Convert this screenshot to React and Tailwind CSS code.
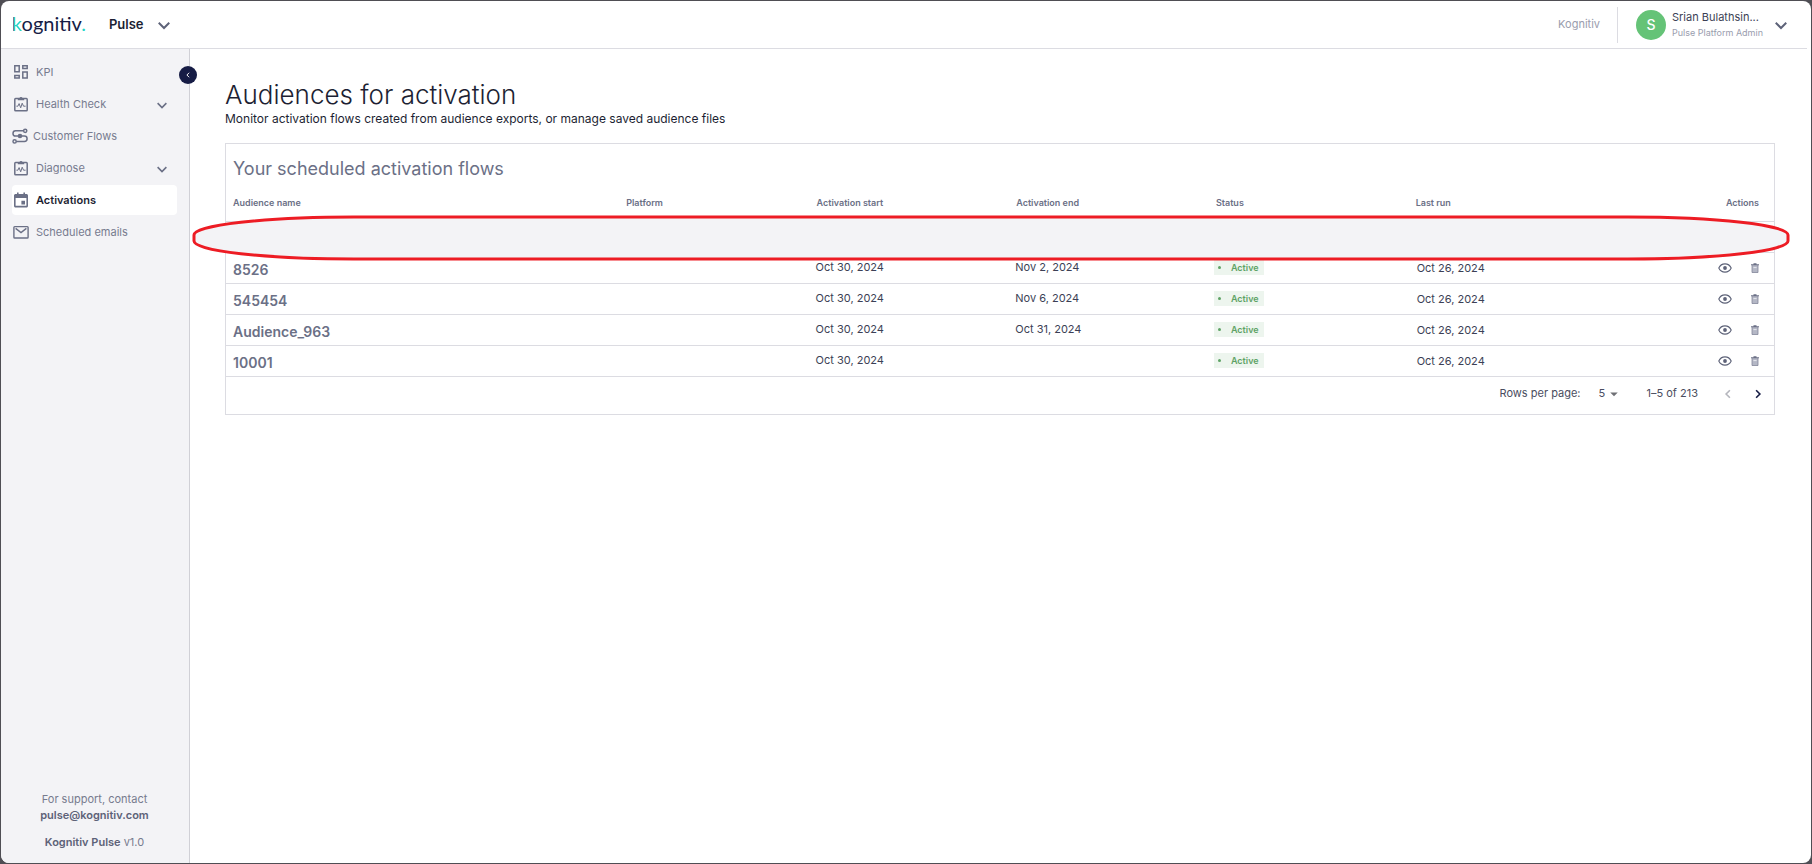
import { MdArrowDropDown } from 'react-icons/md';

const ROWS = [
  { id: 'blank', name: '', start: '', end: '', status: '', lastRun: '' },
  { id: '8526', name: '8526', start: 'Oct 30, 2024', end: 'Nov 2, 2024', status: 'Active', lastRun: 'Oct 26, 2024' },
  { id: '545454', name: '545454', start: 'Oct 30, 2024', end: 'Nov 6, 2024', status: 'Active', lastRun: 'Oct 26, 2024' },
  { id: '963', name: 'Audience_963', start: 'Oct 30, 2024', end: 'Oct 31, 2024', status: 'Active', lastRun: 'Oct 26, 2024' },
  { id: '10001', name: '10001', start: 'Oct 30, 2024', end: '', status: 'Active', lastRun: 'Oct 26, 2024' },
];

const DashboardIcon = () => (
  <svg viewBox="0 0 16 16" className="w-4 h-4 shrink-0" fill="none" stroke="currentColor" strokeWidth="1.5" aria-hidden="true">
    <path d="M1.8 1.8h4.4v6H1.8zM9.8 1.8h4.4v2.6H9.8zM1.8 11.4h4.4V14H1.8zM9.8 8h4.4v6H9.8z" />
  </svg>
);

const PulseClipboardIcon = () => (
  <svg viewBox="0 0 16 16" className="w-4 h-4 shrink-0" fill="none" stroke="currentColor" strokeWidth="1.5" aria-hidden="true">
    <rect x="1.8" y="2.6" width="12.4" height="12.2" rx="0.8" />
    <path d="M4.8 4.2V2h1.7a1.6 1.6 0 0 1 3 0h1.7v2.2z" fill="currentColor" stroke="none" />
    <path d="M3.4 10.2h1.5l1.2-2.6 1.6 4.2 1.5-4.6 1.3 3h2.1" strokeWidth="1" />
  </svg>
);

const FlowIcon = () => (
  <svg viewBox="0 0 16 16" className="w-4 h-4 shrink-0" fill="none" stroke="currentColor" strokeWidth="1.5" aria-hidden="true">
    <circle cx="13.2" cy="2.8" r="1.6" />
    <circle cx="2.6" cy="13.4" r="1.6" />
    <path d="M11.6 2.8H3.6a2.6 2.6 0 0 0 0 5.2h8.8a2.7 2.7 0 0 1 0 5.4H4.2" />
    <circle cx="8" cy="8" r="2.3" fill="currentColor" stroke="none" />
  </svg>
);

const CalendarIcon = () => (
  <svg viewBox="0 0 16 16" className="w-4 h-4 shrink-0" aria-hidden="true">
    <path
      d="M4 0.6h1.6V2h4.8V0.6H12V2h1.4c.9 0 1.6.7 1.6 1.5v10.4c0 .8-.7 1.5-1.6 1.5H2.6c-.9 0-1.6-.7-1.6-1.5V3.5C1 2.7 1.7 2 2.6 2H4zM2.6 6v7.8h10.8V6z"
      fill="currentColor"
      fillRule="evenodd"
    />
    <path d="M8.4 8.8h3.6v3.6H8.4z" fill="currentColor" />
  </svg>
);

const MailIcon = () => (
  <svg viewBox="0 0 16 16" className="w-4 h-4 shrink-0" fill="none" stroke="currentColor" strokeWidth="1.4" aria-hidden="true">
    <rect x="0.9" y="2.6" width="14.2" height="11.4" rx="0.8" />
    <path d="M2.6 4.4L8 8.6l5.4-4.2" />
  </svg>
);

const Chevron = ({ direction = 'down', className }) => {
  const paths = {
    down: 'M1 5l7 7 7-7',
    left: 'M11 2L5 8l6 6',
    right: 'M5 2l6 6-6 6',
  };
  return (
    <svg viewBox="0 0 16 16" className={className} fill="none" stroke="currentColor" strokeWidth="2.6" aria-hidden="true">
      <path d={paths[direction]} />
    </svg>
  );
};

const EyeIcon = () => (
  <svg viewBox="0 0 14 10" className="w-3.5 h-2.5" fill="none" stroke="currentColor" strokeWidth="1.1" aria-hidden="true">
    <path d="M0.8 5C2 2.4 4.2 0.9 7 0.9S12 2.4 13.2 5C12 7.6 9.8 9.1 7 9.1S2 7.6 0.8 5z" />
    <circle cx="7" cy="5" r="1.9" fill="currentColor" stroke="none" />
  </svg>
);

const TrashIcon = () => (
  <svg viewBox="0 0 8 10" className="w-2 h-2.5" aria-hidden="true">
    <path d="M1 2h6v7.5H1z" fill="#b4b7c5" />
    <path d="M0 1.2h2.5V0.3h3v0.9H8v1H0z" fill="#6b7086" />
    <path d="M1 2v7.5h6V2" fill="none" stroke="#83879b" strokeWidth="0.8" />
    <path d="M2.4 4.6h3.2" stroke="#f3f3f6" strokeWidth="0.8" />
  </svg>
);

const NAV = [
  { label: 'KPI', icon: <DashboardIcon /> },
  { label: 'Health Check', icon: <PulseClipboardIcon />, expandable: true },
  { label: 'Customer Flows', icon: <FlowIcon />, tight: true },
  { label: 'Diagnose', icon: <PulseClipboardIcon />, expandable: true },
  { label: 'Activations', icon: <CalendarIcon />, active: true },
  { label: 'Scheduled emails', icon: <MailIcon /> },
];

const Header = () => (
  <header className="flex items-center h-[47px] box-content border-b border-[#dcdce2] mr-1 pl-[11px]">
    <a href="#home" className="pb-1 font-[Lato] text-[20px] leading-6 text-[#161c45]">
      <span className="bg-linear-to-r from-[#161c45] from-25% to-[#25d5c8] to-25% bg-clip-text text-transparent">k</span>
      ognitiv<span className="text-[#25d5c8]">.</span>
    </a>
    <button className="flex items-center gap-3.5 ml-[23px] text-[13px] font-semibold text-[#1d1f33]">
      Pulse
      <Chevron className="w-3 h-3 text-[#5d6278]" />
    </button>
    <div className="flex items-center ml-auto">
      <span className="text-[11px] text-[#9a9dae]">Kognitiv</span>
      <span className="w-px h-9 bg-[#dcdce2] ml-[17px] mr-[18px]" />
      <button className="flex items-center text-left">
        <span className="flex items-center justify-center w-[30px] h-[30px] rounded-full bg-[#65c377] text-white text-sm font-medium">S</span>
        <span className="ml-1.5 w-[103px]">
          <span className="block text-[11px] leading-4 text-[#3c3f55]">Srian Bulathsin...</span>
          <span className="block text-[9px] leading-4 text-[#9a9dae] whitespace-nowrap">Pulse Platform Admin</span>
        </span>
        <Chevron className="w-3 h-3 text-[#5d6278] mr-5" />
      </button>
    </div>
  </header>
);

const Sidebar = () => (
  <aside className="relative flex flex-col w-[189px] shrink-0 bg-[#f3f3f6] border-r border-[#d0d0d6] pt-2 pl-[11px] pr-3">
    <button
      aria-label="Collapse sidebar"
      className="absolute -right-2 top-[17px] flex items-center justify-center w-[18px] h-[18px] rounded-full bg-[#161c45] text-white"
    >
      <Chevron direction="left" className="w-1.5 h-1.5" />
    </button>
    <nav className="flex flex-col gap-0.5">
      {NAV.map(({ label, icon, expandable, tight, active }) => (
        <a
          key={label}
          href="#nav"
          className={`flex items-center h-[30px] rounded text-[11px] text-[#6b7086] ${
            tight ? 'gap-[5px]' : 'pl-px gap-[7px]'
          } ${active ? 'bg-white' : ''}`}
        >
          {icon}
          <span className={active ? 'font-semibold text-[#1d1f33]' : 'text-[#777b8f]'}>{label}</span>
          {expandable && <Chevron className="w-2.5 h-2.5 mt-0.5 ml-auto mr-2.5" />}
        </a>
      ))}
    </nav>
    <div className="mt-auto pb-[13px] text-center text-[11px] leading-4 text-[#777b8e]">
      <p>For support, contact</p>
      <a href="mailto:pulse@kognitiv.com" className="font-semibold text-[#5d6278]">pulse@kognitiv.com</a>
      <p className="mt-[11px]"><span className="font-semibold text-[#5d6278]">Kognitiv Pulse</span> v1.0</p>
    </div>
  </aside>
);

const FlowsTable = () => (
  <table className="w-full table-fixed text-left">
    <colgroup>
      <col className="w-[25.4%]" />
      <col className="w-[12.3%]" />
      <col className="w-[12.9%]" />
      <col className="w-[12.9%]" />
      <col className="w-[12.9%]" />
      <col />
      <col className="w-[10%]" />
    </colgroup>
    <thead>
      <tr className="h-10 border-b border-[#dcdce2] text-[9px] text-[#6b7086] *:font-semibold *:px-[7px] *:pt-1">
        <th>Audience name</th>
        <th>Platform</th>
        <th>Activation start</th>
        <th>Activation end</th>
        <th>Status</th>
        <th>Last run</th>
        <th><span className="block text-right pr-2">Actions</span></th>
      </tr>
    </thead>
    <tbody>
      {ROWS.map((row) => (
        <tr key={row.id} className="h-[31px] border-b border-[#dcdce2] text-[11px] leading-4 text-[#3c3f55]">
          <td className="px-[7px] pt-1 text-sm leading-4 font-semibold text-[#6b7086]">{row.name}</td>
          <td />
          <td className="px-1.5 pb-0.5">{row.start}</td>
          <td className="px-1.5 pb-0.5">{row.end}</td>
          <td className="px-[5px]">
            {row.status && (
              <span className="flex items-center gap-2.5 w-[50px] h-[15px] pl-1 bg-[#edf5ee] text-[9px] font-semibold text-[#5fa366]">
                <span className="w-[3px] h-[3px] rounded-full bg-[#5fa366]" />
                {row.status}
              </span>
            )}
          </td>
          <td className="px-2">{row.lastRun}</td>
          <td>
            {row.name && (
              <div className="flex items-center justify-end gap-[19px] pr-[15px] text-[#5d6278]">
                <button aria-label={`View ${row.name}`}><EyeIcon /></button>
                <button aria-label={`Delete ${row.name}`}><TrashIcon /></button>
              </div>
            )}
          </td>
        </tr>
      ))}
    </tbody>
  </table>
);

const Pagination = () => (
  <div className="flex items-center justify-end h-[37px] pr-[11px] pb-[3px] text-[11px] text-[#4a4d60]">
    <label htmlFor="rows">Rows per page:</label>
    <div className="relative flex items-center ml-3">
      <select id="rows" defaultValue="5" className="appearance-none w-7 pl-1.5 bg-transparent">
        <option>5</option>
        <option>10</option>
        <option>25</option>
      </select>
      <MdArrowDropDown className="absolute -right-0.5 w-[18px] h-[18px] text-[#6f7075] pointer-events-none" />
    </div>
    <span className="ml-[26px]">1–5 of 213</span>
    <button aria-label="Previous page" disabled className="ml-[25px] text-[#b5b6bd]">
      <Chevron direction="left" className="w-2.5 h-2.5" />
    </button>
    <button aria-label="Next page" className="ml-5 text-[#161c45]">
      <Chevron direction="right" className="w-2.5 h-2.5" />
    </button>
  </div>
);

export default function App() {
  return (
    <div className="min-h-screen flex bg-[#4f4e54] p-px font-[Inter,sans-serif]">
      <div className="flex flex-col flex-1 bg-white rounded-lg overflow-hidden">
        <Header />
        <div className="flex flex-1">
          <Sidebar />
          <main className="flex-1 min-w-0 pl-[35px] pr-9 pt-[30px]">
            <h1 className="text-[26px] leading-8 font-light text-[#1d1f33]">Audiences for activation</h1>
            <p className="text-xs leading-4 text-[#1d1f33]">
              Monitor activation flows created from audience exports, or manage saved audience files
            </p>
            <section className="relative mt-4 border border-[#dcdce2]">
              <h2 className="pt-[13px] pl-[7px] text-[18px] leading-6 text-[#6b7086]">Your scheduled activation flows</h2>
              <FlowsTable />
              <Pagination />
              {/* hand-drawn highlight around the empty row */}
              <div className="absolute -left-8 -right-3.5 top-[73px] h-[42px]">
                <svg className="w-full h-full overflow-visible" aria-hidden="true">
                  <rect width="100%" height="100%" rx="160" ry="18" fill="#f3f3f6" stroke="#ed1c24" strokeWidth="3" />
                </svg>
              </div>
            </section>
          </main>
        </div>
      </div>
    </div>
  );
}
